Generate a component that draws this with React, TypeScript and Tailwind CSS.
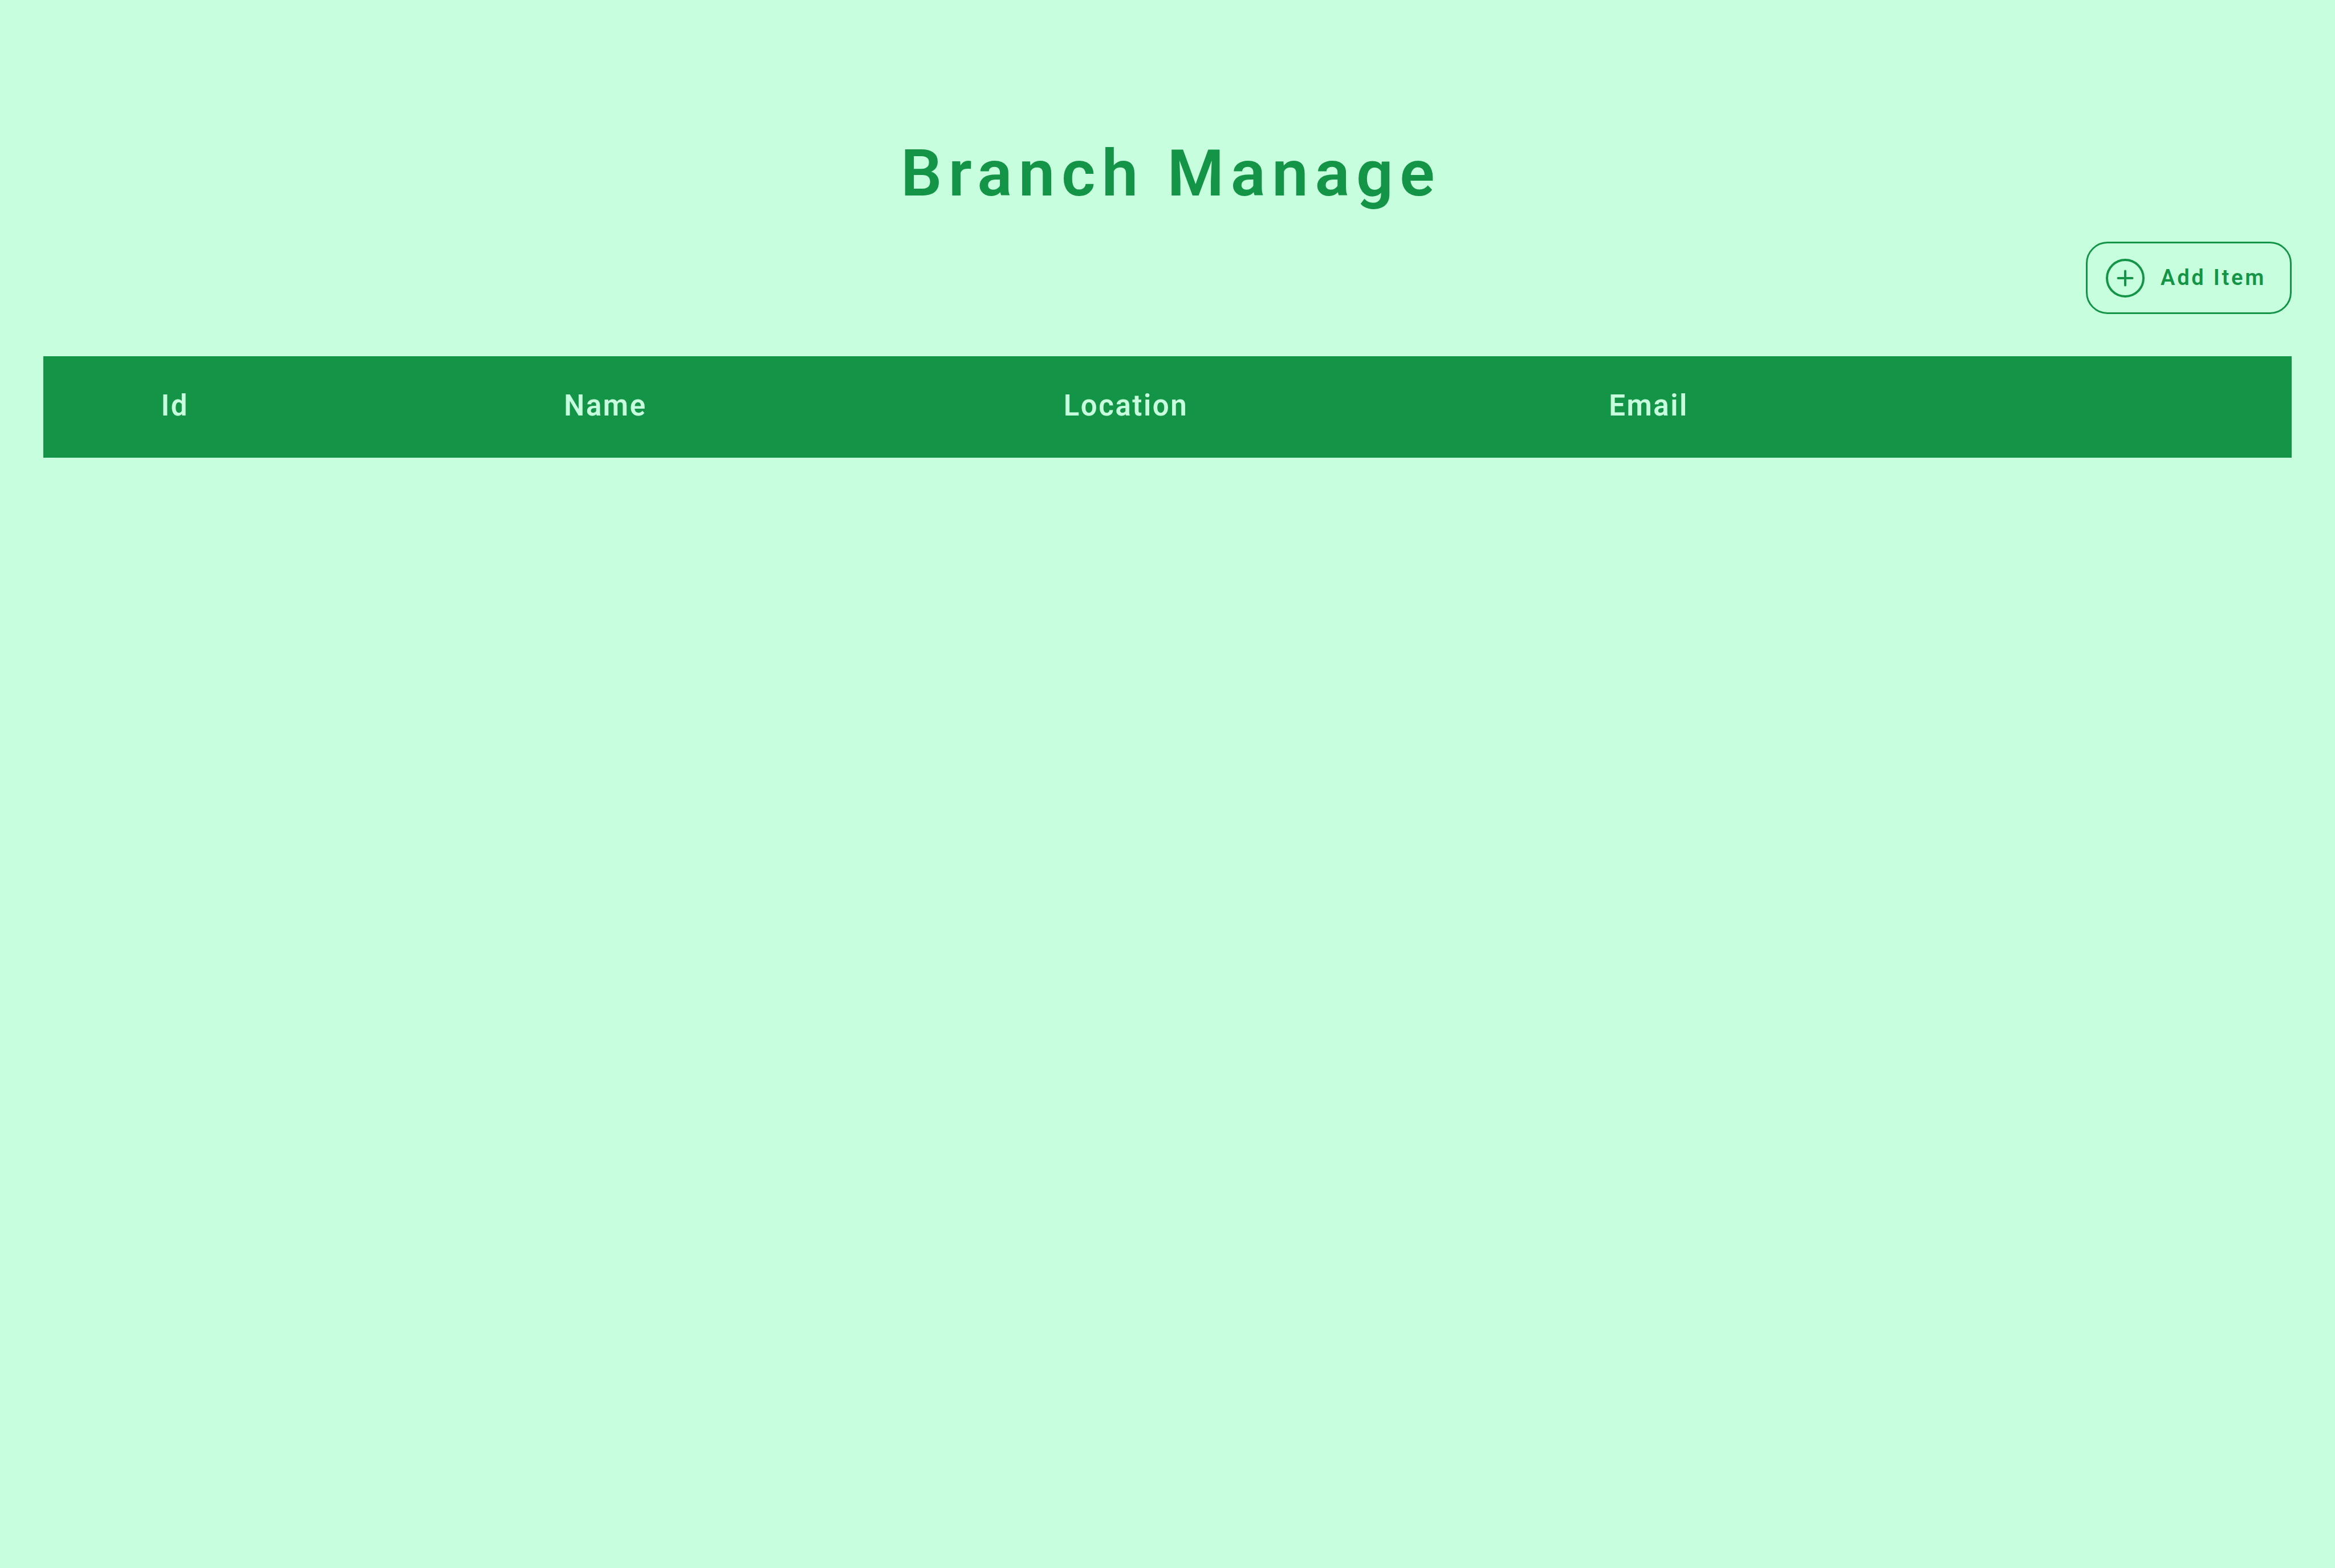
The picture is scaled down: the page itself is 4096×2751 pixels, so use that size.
const columns = ["Id", "Name", "Location", "Email"];

export default function App() {
  return (
    <main className="min-h-screen bg-[#c7fedd] px-[76px] pt-[240px] font-['Roboto',sans-serif] text-[#149447]">
      <h1 className="pl-3 text-center text-[114px] leading-[128px] font-semibold tracking-widest">Branch Manage</h1>
      <div className="mt-14 flex justify-end">
        <button type="button" className="flex h-[127px] w-[361px] items-center gap-7 rounded-[38px] border-3 border-[#149447] pl-8 text-[38px] font-semibold tracking-widest whitespace-nowrap">
          <svg className="size-[68px] shrink-0" viewBox="0 0 68 68" fill="none" stroke="currentColor" strokeWidth="4" strokeLinecap="round" aria-hidden="true">
            <circle cx="34" cy="34" r="32" />
            <path d="M34 21.5v25M21.5 34h25" />
          </svg>
          Add Item
        </button>
      </div>
      <table className="mt-[74px] w-full table-fixed bg-[#149447] text-[#c7fedd]">
        <colgroup>
          <col className="w-[11.7%]" />
          <col className="w-[26.6%]" />
          <col className="w-[19.7%]" />
          <col className="w-[26.8%]" />
          <col />
        </colgroup>
        <thead>
          <tr className="h-[178px] text-[51px] leading-[60px] tracking-wider">
            {columns.map((name) => (
              <th key={name} scope="col" className="p-0 pb-1 text-center font-semibold">{name}</th>
            ))}
            <td />
          </tr>
        </thead>
      </table>
    </main>
  );
}
